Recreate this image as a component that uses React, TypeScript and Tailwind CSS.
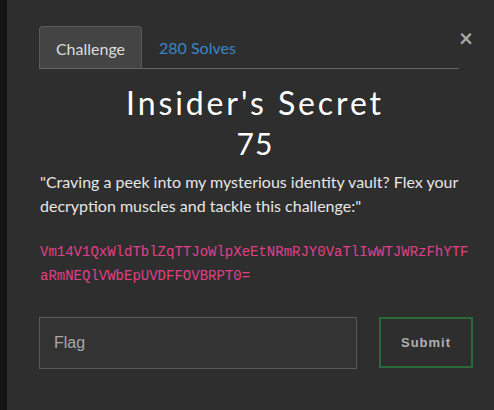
export default function App() {
  return (
    <div className="flex h-[410px] w-full bg-[#141414] font-['Lato',sans-serif]">
      <div className="w-[7px] shrink-0" />
      <div className="relative flex-1 bg-[#2e2e2e]">
        {/* close */}
        <button className="absolute left-[452px] top-[26px] text-[24px] leading-none font-bold text-[#a8a8a8]">
          ×
        </button>

        {/* tabs */}
        <div className="ml-[32px] mt-[27px] flex h-[42px] w-[420px] items-end border-b border-[#666]">
          <div className="flex h-[42px] w-[103px] items-center justify-center rounded-t-[4px] border border-b-0 border-[#5a5a5a] bg-[#444] pt-[2px] text-[16px] text-[#ddd]">
            Challenge
          </div>
          <div className="flex h-[42px] items-center pl-[17px] pt-[2px] text-[16px] text-[#3a85c6]">
            280 Solves
          </div>
        </div>

        <div className="w-[496px] text-center">
          <h1 className="mt-[15px] text-[32px] leading-[38px] tracking-[2.9px] text-white font-normal">
            Insider's Secret
          </h1>
          <div className="mt-[4px] text-[30px] leading-[34px] tracking-[1px] text-white font-normal">75</div>
        </div>

        <p className="ml-[33px] mt-[10px] w-[440px] text-[16px] leading-[24px] text-[#e6e6e6]">
          "Craving a peek into my mysterious identity vault? Flex your decryption muscles and tackle this challenge:"
        </p>

        <div className="ml-[33px] mt-[22px] font-['Liberation_Mono',monospace] text-[14px] leading-[24px] text-[#e0408a]">
          <div>Vm14V1QxWldTblZqTTJoWlpXeEtNRmRJY0VaTlIwWTJWRzFhYTF</div>
          <div>aRmNEQlVWbEpUVDFFOVBRPT0=</div>
        </div>

        <div className="ml-[32px] mt-[29px] flex items-start gap-[22px]">
          <div className="flex h-[52px] w-[318px] items-center border border-[#595959] bg-[#333] pl-[14px] font-['Liberation_Sans',sans-serif] text-[16px] text-[#a8a8a8]">
            Flag
          </div>
          <button className="flex h-[51px] w-[94px] items-center justify-center border-2 border-[#2b6a38] bg-[#2e2e2e] font-['Liberation_Sans',sans-serif] text-[13px] font-bold tracking-[1px] text-[#b0b0b0]">
            Submit
          </button>
        </div>
      </div>
    </div>
  );
}
